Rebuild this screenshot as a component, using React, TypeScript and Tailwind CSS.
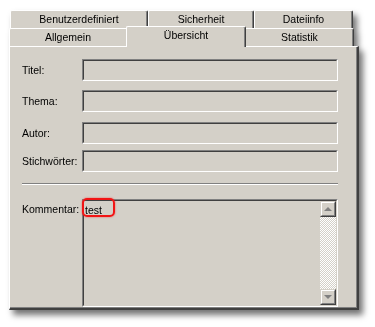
import React from "react";

// classic Win9x/2000 property sheet colours
const backTab =
  "flex h-full items-center justify-center rounded-t-[2px] border-l border-t border-r border-white border-r-[#404040] bg-[#d4d0c8] shadow-[inset_-1px_0_0_#808080]";

function Sunken({ className, children }: { className: string; children?: React.ReactNode }) {
  return (
    <div className={`border border-t-[#808080] border-l-[#808080] border-b-white border-r-white ${className}`}>
      <div className="flex h-full border border-t-[#404040] border-l-[#404040] border-b-[#d4d0c8] border-r-[#d4d0c8]">
        {children}
      </div>
    </div>
  );
}

function ScrollButton({ up }: { up: boolean }) {
  return (
    <div className="h-[16px] w-[16px] border border-t-[#d4d0c8] border-l-[#d4d0c8] border-b-[#404040] border-r-[#404040] bg-[#d4d0c8]">
      <div className="flex h-full items-center justify-center border border-t-white border-l-white border-b-[#808080] border-r-[#808080]">
        {up ? (
          <div className="h-0 w-0 border-x-[4px] border-b-[4px] border-x-transparent border-b-[#808080]" />
        ) : (
          <div className="h-0 w-0 border-x-[4px] border-t-[4px] border-x-transparent border-t-[#808080]" />
        )}
      </div>
    </div>
  );
}

function Field({ label, className }: { label: string; className: string }) {
  return (
    <div className={`flex h-[22px] items-center ${className}`}>
      <span className="w-[60px]">{label}</span>
      <Sunken className="h-[22px] w-[256px]" />
    </div>
  );
}

export default function App() {
  return (
    <div className="h-[327px] w-[375px] overflow-hidden bg-white font-['Liberation_Sans',Arial,sans-serif] text-[10.5px] leading-none text-black">
      <div className="ml-[9px] mt-[10px] w-[350px] drop-shadow-[4px_5px_3px_rgba(0,0,0,0.55)]">
        {/* back row of tabs */}
        <div className="flex h-[18px] pl-[1px]">
          <div className={`${backTab} w-[138px]`}>Benutzerdefiniert</div>
          <div className={`${backTab} w-[106px]`}>Sicherheit</div>
          <div className={`${backTab} w-[99px]`}>Dateiinfo</div>
        </div>

        {/* front row of tabs */}
        <div className="flex h-[18px]">
          <div className="flex h-full w-[119px] items-center justify-center rounded-tl-[2px] border-l border-t border-white bg-[#d4d0c8] pr-[2px]">
            Allgemein
          </div>
          <div className="relative z-10 -ml-[2px] -mt-[2px] flex h-[21px] w-[120px] items-center justify-center rounded-t-[2px] border-l border-t border-r border-white border-r-[#404040] bg-[#d4d0c8] pb-[3px] shadow-[inset_-1px_0_0_#808080]">
            Übersicht
          </div>
          <div className="flex h-full w-[108px] items-center justify-center rounded-tr-[2px] border-t border-r border-white border-r-[#404040] bg-[#d4d0c8] shadow-[inset_-1px_0_0_#808080]">
            Statistik
          </div>
        </div>

        {/* page body */}
        <div className="h-[264px] border-l border-t border-r-2 border-b-2 border-white border-r-[#404040] border-b-[#404040] bg-[#d4d0c8] pl-[12px] pt-[12px] shadow-[inset_-1px_-1px_0_#808080]">
          <Field label="Titel:" className="" />
          <Field label="Thema:" className="mt-[9px]" />
          <Field label="Autor:" className="mt-[10px]" />
          <Field label="Stichwörter:" className="mt-[6px]" />

          <div className="mt-[11px] h-[2px] w-[316px] border-t border-b border-t-[#808080] border-b-white" />

          <div className="mt-[14px] flex items-start">
            <span className="w-[60px] pt-[5px]">Kommentar:</span>
            <div className="relative">
              <Sunken className="h-[108px] w-[256px]">
                <div className="flex-1 pl-[1px] pt-[4px]">test</div>
                <div className="flex w-[16px] flex-col">
                  <ScrollButton up />
                  <div className="flex-1 bg-[image:repeating-conic-gradient(#ffffff_0%_25%,#d4d0c8_0%_50%)] bg-[length:2px_2px]" />
                  <ScrollButton up={false} />
                </div>
              </Sunken>
              {/* red highlight around the value */}
              <div className="absolute left-0 -top-[1px] h-[19px] w-[33px] rounded-[5px] border-2 border-[#f21414] shadow-[0_0_2px_rgba(255,0,0,0.6)]" />
            </div>
          </div>
        </div>
      </div>
    </div>
  );
}
